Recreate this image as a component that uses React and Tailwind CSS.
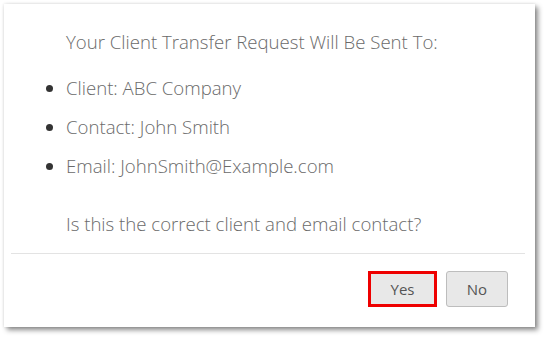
export default function App() {
  return (
    <div className="w-[545px] h-[337px] bg-white pl-[4px] pt-[4px]" style={{ fontFamily: '"Open Sans", "Liberation Sans", sans-serif' }}>
      <div className="w-[531px] h-[323px] bg-white flex flex-col shadow-[3px_3px_5px_rgba(0,0,0,0.45),_0_0_3px_rgba(0,0,0,0.12)]">
        <div className="pl-[62px] pt-[26px] text-[18.6px] leading-[24px] font-light text-[#6a6a6a]">
          <p>Your Client Transfer Request Will Be Sent To:</p>
          <ul className="list-disc mt-[22px] flex flex-col gap-[15px] marker:text-[#333]">
            <li>Client: ABC Company</li>
            <li>Contact: John Smith</li>
            <li>Email: JohnSmith@Example.com</li>
          </ul>
          <p className="mt-[34px]">Is this the correct client and email contact?</p>
        </div>
        <div className="mt-[17px] ml-[7px] mr-[10px] h-px bg-[#e3e3e3]" />
        <div className="flex justify-end gap-[9px] mt-[17px] pr-[27px]">
          <button className="w-[69px] h-[36px] bg-[#e8e8e8] border-[3px] border-[#ee0000] text-[15px] text-[#555]">Yes</button>
          <button className="w-[62px] h-[36px] bg-[#e8e8e8] border border-[#bdbdbd] rounded-[3px] text-[15px] text-[#555]">No</button>
        </div>
      </div>
    </div>
  );
}
